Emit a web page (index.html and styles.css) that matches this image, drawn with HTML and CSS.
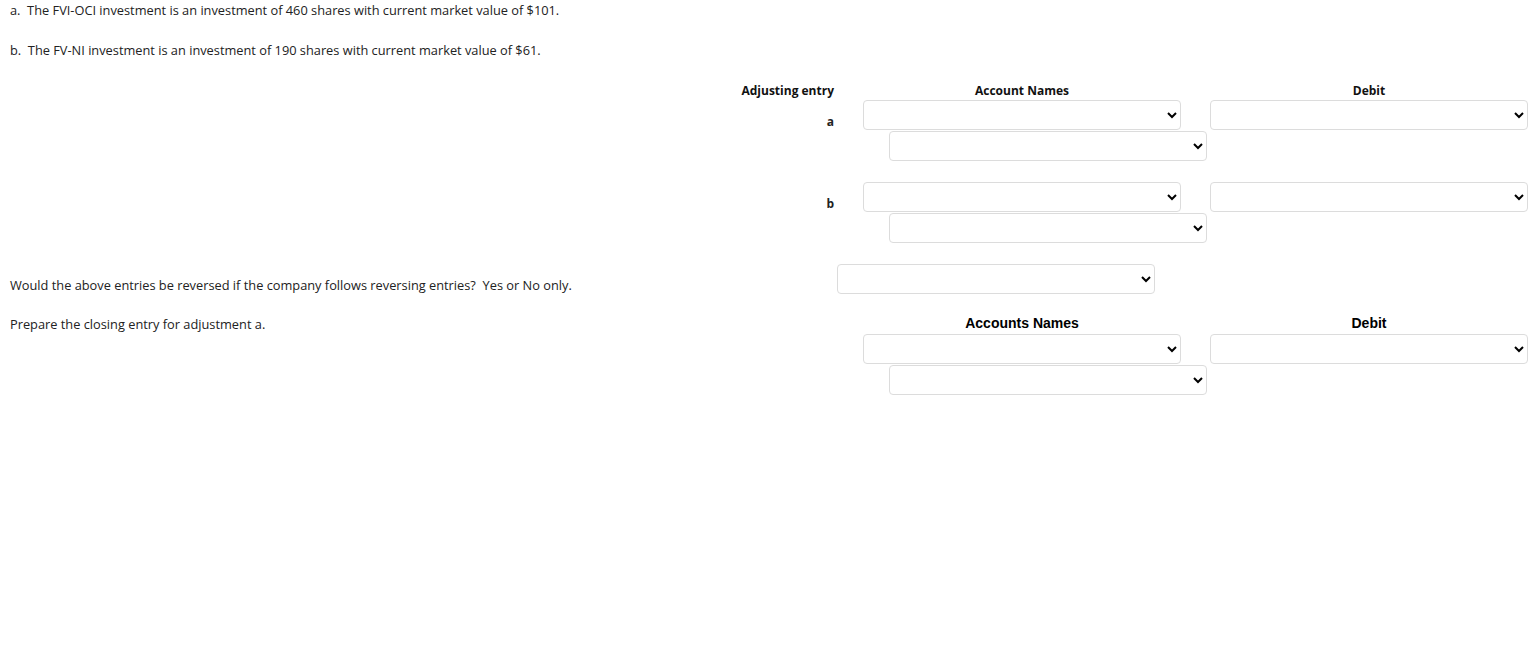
FILE: index.html
```html
<!DOCTYPE html>
<html lang="en">
<head>
  <meta charset="UTF-8" />
  <title>Adjusting Entries</title>
  <link rel="stylesheet" href="styles.css">
</head>
<body>
  <p class="line">a.&nbsp; The FVI-OCI investment is an investment of 460 shares with current market value of $101.</p>
  <p class="line">b.&nbsp; The FV-NI investment is an investment of 190 shares with current market value of $61.</p>

  <!-- adjusting entries -->
  <div class="journal">
    <div class="entry-head">
      <div class="col-label">Adjusting entry</div>
      <div class="col-account"><div class="head-title">Account Names</div></div>
      <div class="col-debit">Debit</div>
    </div>

    <div class="entry">
      <div class="col-label entry-letter">a</div>
      <div class="col-account">
        <select class="pick"><option></option></select>
        <select class="pick credit"><option></option></select>
      </div>
      <div class="col-debit">
        <select class="pick"><option></option></select>
      </div>
    </div>

    <div class="entry">
      <div class="col-label entry-letter">b</div>
      <div class="col-account">
        <select class="pick"><option></option></select>
        <select class="pick credit"><option></option></select>
      </div>
      <div class="col-debit">
        <select class="pick"><option></option></select>
      </div>
    </div>
  </div>

  <div class="question">
    <p class="q-text">Would the above entries be reversed if the company follows reversing entries?&nbsp; Yes or No only.</p>
    <select class="pick yesno"><option></option></select>
  </div>

  <!-- closing entry -->
  <div class="closing">
    <p class="q-text closing-text">Prepare the closing entry for adjustment a.</p>
    <div class="closing-grid">
      <div class="closing-head">
        <div class="col-account"><div class="head-title">Accounts Names</div></div>
        <div class="col-debit">Debit</div>
      </div>
      <div class="entry">
        <div class="col-account">
          <select class="pick"><option></option></select>
          <select class="pick credit"><option></option></select>
        </div>
        <div class="col-debit">
          <select class="pick"><option></option></select>
        </div>
      </div>
    </div>
  </div>
</body>
</html>
```

FILE: styles.css
```css
body {
  margin: 0;
  padding: 3px 10px 0;
  font-family: "Open Sans", "Noto Sans", sans-serif;
  font-size: 12.8px;
  color: #222;
  background-color: #fff;
}

p {
  margin: 0;
}

.line {
  line-height: 15px;
  margin-bottom: 25px;
}

.journal {
  margin-left: 731px;
}

.entry-head {
  display: flex;
  font-size: 12px;
  font-weight: bold;
  line-height: 15px;
  color: #111;
  margin-bottom: 2px;
}

.col-label {
  width: 93px;
  text-align: right;
  flex-shrink: 0;
}

.col-account {
  width: 344px;
  margin-left: 29px;
  flex-shrink: 0;
}

.col-debit {
  width: 318px;
  margin-left: 3px;
  text-align: center;
  flex-shrink: 0;
}

.head-title {
  width: 318px;
  text-align: center;
}

.entry {
  display: flex;
  margin-bottom: 21px;
}

.entry-letter {
  font-size: 12px;
  font-weight: bold;
  padding-top: 14px;
  line-height: 15px;
}

.pick {
  display: block;
  width: 318px;
  height: 30px;
  margin: 0;
  border: 1px solid #dcdcdc;
  border-radius: 4px;
  background-color: #fff;
  font-family: inherit;
  font-size: 12px;
}

.pick.credit {
  margin-top: 1px;
  margin-left: 26px;
}

.question {
  display: flex;
  align-items: flex-start;
}

.q-text {
  width: 827px;
  flex-shrink: 0;
  line-height: 15px;
  padding-top: 14px;
}

.yesno {
  width: 318px;
}

.closing {
  display: flex;
  margin-top: 21px;
}

.closing-text {
  width: 853px;
  padding-top: 2px;
}

.closing-head {
  display: flex;
  font-family: "Liberation Sans", Arial, sans-serif;
  font-weight: bold;
  font-size: 14px;
  line-height: 17px;
  color: #000;
}

.closing-head .col-account,
.closing .entry .col-account {
  margin-left: 0;
}

.closing .entry {
  margin-top: 2px;
}
```
